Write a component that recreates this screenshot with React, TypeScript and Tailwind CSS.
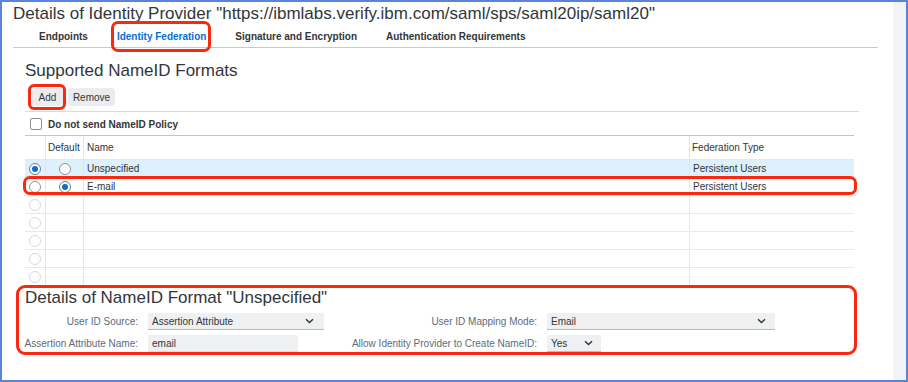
import React from "react";

function Radio({ checked, faint }: { checked?: boolean; faint?: boolean }) {
  const ring = faint ? "border-[#d6d9dd]" : checked ? "border-[#6f7f90]" : "border-[#8a929b]";
  return (
    <span className={`w-[12px] h-[12px] rounded-full border ${ring} bg-white flex items-center justify-center`}>
      {checked && <span className="w-[6px] h-[6px] rounded-full bg-[#0a6ed1]" />}
    </span>
  );
}

function Chevron() {
  return (
    <svg width="9" height="6" viewBox="0 0 9 6" className="shrink-0">
      <path d="M1 1.2 L4.5 4.6 L8 1.2" fill="none" stroke="#32363a" strokeWidth="1.4" />
    </svg>
  );
}

function Redbox({ className }: { className: string }) {
  return <span className={`pointer-events-none absolute border-[3px] border-[#f8290f] ${className}`} />;
}

type Row = { sel?: boolean; def?: boolean; name?: string; fed?: string; blue?: boolean; box?: boolean; faint?: boolean; nodef?: boolean };

const rows: Row[] = [
  { sel: true, def: false, name: "Unspecified", fed: "Persistent Users", blue: true },
  { sel: false, def: true, name: "E-mail", fed: "Persistent Users", box: true },
  { faint: true, nodef: true },
  { faint: true, nodef: true },
  { faint: true, nodef: true },
  { faint: true, nodef: true },
  { faint: true, nodef: true },
];

export default function App() {
  return (
    <div className="w-[908px] h-[382px] border-2 border-[#5a84d8] bg-white flex font-['Liberation_Sans',Arial,sans-serif] text-[#32363a] overflow-hidden">
      <div className="flex-1 flex flex-col">
        <div className="h-[24px] leading-[24px] text-[17px] pl-[11px] whitespace-nowrap">
          Details of Identity Provider "https://ibmlabs.verify.ibm.com/saml/sps/saml20ip/saml20"
        </div>
        <div className="h-[22px] ml-[11px] w-[865px] border-b border-[#c6cacf] flex items-center pl-[26px] gap-[29px] text-[10px] font-bold">
          <span>Endpoints</span>
          <span className="relative text-[#0a6ed1]">
            Identity Federation
            <Redbox className="-left-[6px] -right-[5px] -top-[8px] -bottom-[8px] rounded-[7px]" />
          </span>
          <span>Signature and Encryption</span>
          <span>Authentication Requirements</span>
        </div>

        <div className="ml-[23px] mt-[12px] h-[22px] leading-[22px] text-[17px]">Supported NameID Formats</div>

        <div className="ml-[30px] mt-[6px] h-[18px] flex gap-[5px] text-[10px]">
          <span className="relative w-[31px] h-[18px] rounded-[4px] bg-[#eaecee] flex items-center justify-center">
            Add
            <Redbox className="-left-[4px] -right-[3px] -top-[4px] -bottom-[4px] rounded-[6px]" />
          </span>
          <span className="w-[47px] h-[18px] rounded-[4px] bg-[#eaecee] flex items-center justify-center">Remove</span>
        </div>

        <div className="ml-[23px] mt-[5px] w-[834px] border-t border-[#d9dcdf]" />

        <div className="ml-[28px] mt-[5px] h-[14px] flex items-center gap-[6px] text-[10px] font-bold">
          <span className="w-[12px] h-[12px] rounded-[2px] border border-[#89919a] bg-white" />
          <span>Do not send NameID Policy</span>
        </div>

        <div className="ml-[23px] mt-[4px] w-[838px] flex flex-col text-[10px]">
          <div className="h-[25px] border-t border-b border-t-[#bfc6ce] border-b-[#e4e6e8] flex w-[829px]">
            <div className="w-[21px] border-r border-[#e4e6e8]" />
            <div className="w-[38px] border-r border-[#e4e6e8] flex items-center pl-[2px]">Default</div>
            <div className="w-[606px] border-r border-[#e4e6e8] flex items-center pl-[3px]">Name</div>
            <div className="flex-1 flex items-center pl-[2px]">Federation Type</div>
          </div>
          {rows.map((r, i) => (
            <div
              key={i}
              className={`relative h-[18px] w-[829px] border-b border-[#e7e9eb] flex ${r.blue ? "bg-[#def0fb]" : "bg-white"}`}
            >
              <div className="w-[21px] border-r border-[#e4e6e8] flex items-center justify-center">
                <Radio checked={r.sel} faint={r.faint} />
              </div>
              <div className="w-[38px] border-r border-[#e4e6e8] flex items-center justify-center">
                {!r.nodef && <Radio checked={r.def} />}
              </div>
              <div className="w-[606px] border-r border-[#e4e6e8] flex items-center pl-[3px]">{r.name}</div>
              <div className="flex-1 flex items-center pl-[3px]">{r.fed}</div>
              {r.box && <Redbox className="-left-[2px] -right-[3px] -top-[2px] bottom-0 rounded-[7px]" />}
            </div>
          ))}
        </div>

        <div className="relative ml-[23px] w-[832px] flex flex-col">
          <Redbox className="-left-[9px] right-0 -top-[1px] -bottom-[3px] rounded-[9px]" />
          <div className="mt-[1px] h-[22px] leading-[22px] text-[17px]">Details of NameID Format "Unspecified"</div>
          <div className="mt-[4px] grid grid-cols-[123px_200px_199px_1fr] gap-y-[5px] text-[10px]">
            <div className="h-[17px] flex items-center justify-end pr-[10px] text-[#5b6b7c]">User ID Source:</div>
            <div className="h-[17px]">
              <div className="w-[176px] h-[17px] bg-[#eef0f2] border-b border-[#b4bac0] rounded-t-[2px] flex items-center justify-between pl-[4px] pr-[10px]">
                <span>Assertion Attribute</span>
                <Chevron />
              </div>
            </div>
            <div className="h-[17px] flex items-center justify-end pr-[10px] text-[#5b6b7c]">User ID Mapping Mode:</div>
            <div className="h-[17px]">
              <div className="w-[228px] h-[17px] bg-[#eef0f2] border-b border-[#b4bac0] rounded-t-[2px] flex items-center justify-between pl-[4px] pr-[9px]">
                <span>Email</span>
                <Chevron />
              </div>
            </div>

            <div className="h-[17px] flex items-center justify-end pr-[10px] text-[#5b6b7c] whitespace-nowrap">Assertion Attribute Name:</div>
            <div className="h-[17px]">
              <div className="w-[150px] h-[17px] bg-[#eef0f2] border-b border-[#d7dade] rounded-t-[2px] flex items-center pl-[4px]">
                <span>email</span>
              </div>
            </div>
            <div className="h-[17px] flex items-center justify-end pr-[10px] text-[#5b6b7c] whitespace-nowrap">Allow Identity Provider to Create NameID:</div>
            <div className="h-[17px]">
              <div className="w-[54px] h-[17px] bg-[#eef0f2] border-b border-[#b4bac0] rounded-t-[2px] flex items-center justify-between pl-[4px] pr-[8px]">
                <span>Yes</span>
                <Chevron />
              </div>
            </div>
          </div>
        </div>
      </div>
      <div className="w-[13px] bg-[#f3f4f7]" />
    </div>
  );
}
